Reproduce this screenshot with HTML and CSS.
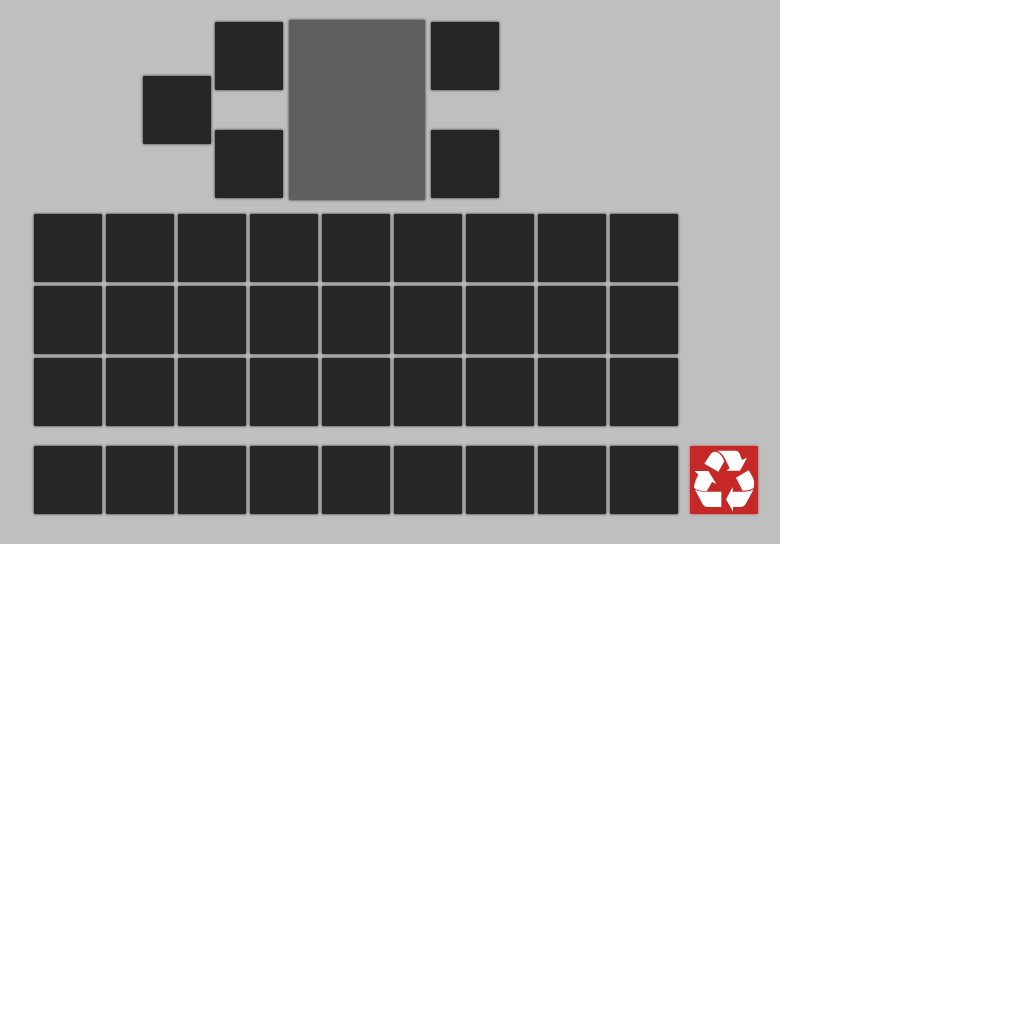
FILE: index.html
```html
<!DOCTYPE html>
<html lang="en">
<head>
<meta charset="utf-8">
<meta name="viewport" content="width=device-width, initial-scale=1">
<title>Inventory</title>
<link rel="stylesheet" href="styles.css">
</head>
<body>
<main class="inventory">
  <section class="equipment" aria-label="Equipment">
    <div class="slot"></div>
    <div class="pair"><div class="slot"></div><div class="slot"></div></div>
    <div class="portrait"></div>
    <div class="pair"><div class="slot"></div><div class="slot"></div></div>
  </section>
  <section class="slots" aria-label="Backpack">
    <div class="slot"></div><div class="slot"></div><div class="slot"></div><div class="slot"></div><div class="slot"></div><div class="slot"></div><div class="slot"></div><div class="slot"></div><div class="slot"></div>
    <div class="slot"></div><div class="slot"></div><div class="slot"></div><div class="slot"></div><div class="slot"></div><div class="slot"></div><div class="slot"></div><div class="slot"></div><div class="slot"></div>
    <div class="slot"></div><div class="slot"></div><div class="slot"></div><div class="slot"></div><div class="slot"></div><div class="slot"></div><div class="slot"></div><div class="slot"></div><div class="slot"></div>
  </section>
  <div class="bottom">
    <section class="slots" aria-label="Hotbar">
      <div class="slot"></div><div class="slot"></div><div class="slot"></div><div class="slot"></div><div class="slot"></div><div class="slot"></div><div class="slot"></div><div class="slot"></div><div class="slot"></div>
    </section>
    <button class="slot recycle" type="button" aria-label="Recycle">
      <svg class="recycle-icon" viewBox="18 18 204 204" aria-hidden="true">
        <path d="M61 71L80 42Q87 33 98 36Q112 41 121 64L103 95Z"/>
        <path d="M99 32H155Q163 32 167 41L174 60L189 53L168 92H127L137 85L122 54Q112 36 99 32Z"/>
        <path d="M32 93H73L97 132L84 126L68 154Q40 153 30 143Q30 128 43 104Z"/>
        <path d="M33 149Q45 155 60 155H112V201H72Q61 201 57 194Z"/>
        <path d="M156 113L194 91L206 112Q213 126 209 143Q200 152 176 152Z"/>
        <path d="M209 148L185 192Q180 201 168 201H147V215L126 178L146 141V155H180Q200 155 209 148Z"/>
      </svg>
    </button>
  </div>
</main>
</body>
</html>
```
FILE: styles.css
```css
* {
  box-sizing: border-box;
}

body {
  margin: 0;
  background: #fff;
  font-family: "Liberation Sans", Arial, sans-serif;
}

.inventory {
  max-width: 780px;
  padding: 20px 22px 30px 34px;
  background: #bfbfbf;
}

.equipment {
  display: flex;
  align-items: center;
  gap: 4px;
  margin-bottom: 14px;
  padding-left: 109px;
}

.pair {
  display: grid;
  gap: 40px;
}

.slot,
.portrait {
  border-radius: 1px;
  box-shadow: 0 0 3px rgba(0, 0, 0, 0.8);
}

.slot {
  width: 68px;
  height: 68px;
  background: #262626;
}

.portrait {
  width: 136px;
  height: 180px;
  margin: 0 2px;
  background: #5f5f5f;
}

.slots {
  display: grid;
  grid-template-columns: repeat(9, 68px);
  gap: 4px;
}

.bottom {
  display: flex;
  gap: 12px;
  margin-top: 20px;
}

.recycle {
  padding: 0;
  border: 0;
  background: #c62828;
  box-shadow: 0 0 3px rgba(198, 40, 40, 0.8);
  cursor: pointer;
}

.recycle-icon {
  display: block;
  width: 100%;
  height: 100%;
  fill: #fff;
}
```
